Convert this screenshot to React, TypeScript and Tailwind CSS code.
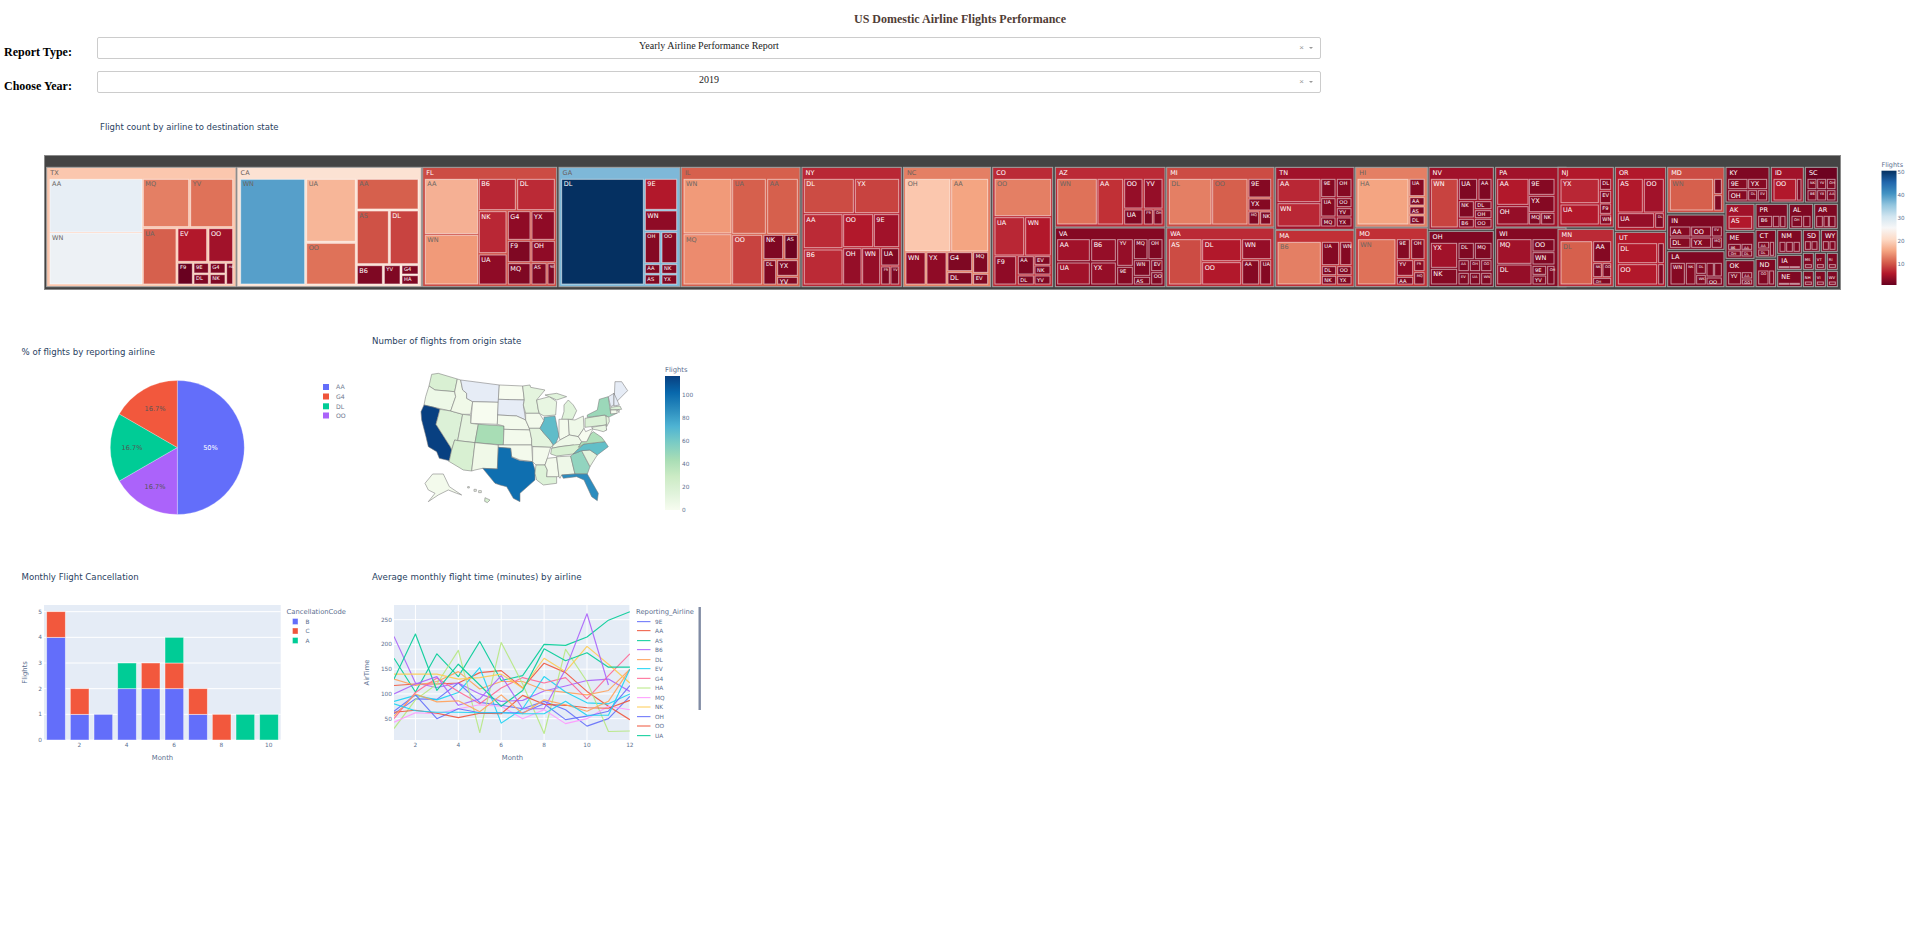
import React from "react";

type Child = [string, number, number, number, number, string?];
type St = [string, number, number, number, number, string, Child[]];

const D = "#7f0823";
const E = "#850923";
const F = "#950e28";
const G = "#a1122a";
const R = "#b2182b";
const B = "#bb2a36";
const H = "#cc4c44";
const I = "#d6604d";
const J = "#df7259";
const K = "#e47f64";

const groups: { o: number; s: St[] }[] = [
  {
    o: 30,
    s: [
      ["TX", 50, 52, 618, 410, "#fbc7ae", [
        ["AA", 60, 88, 336, 246, "#e7eef5"], ["WN", 60, 249, 336, 402, "#edf1f5"], ["MQ", 340, 88, 476, 230, K], ["YV", 482, 88, 608, 230, J],
        ["UA", 340, 236, 438, 402, I], ["EV", 444, 236, 530, 334, R], ["OO", 537, 236, 608, 334, G], ["F9", 444, 340, 487, 402, "#690120"],
        ["9E", 492, 340, 535, 369], ["G4", 541, 340, 585, 369], ["DL", 492, 374, 535, 402], ["NK", 541, 374, 585, 402], ["HA", 590, 340, 608, 402],
      ]],
      ["CA", 621, 52, 1174, 410, "#fce2d3", [
        ["WN", 632, 88, 824, 402, "#569fca"], ["UA", 830, 88, 976, 274, "#f7b698"], ["OO", 830, 280, 976, 402, J], ["AA", 982, 88, 1164, 177, I],
        ["AS", 982, 183, 1075, 341, "#cf5246"], ["DL", 1081, 183, 1164, 341, "#c84340"], ["B6", 982, 347, 1057, 402], ["YV", 1063, 347, 1110, 402],
        ["G4", 1116, 347, 1164, 372], ["HA", 1116, 377, 1164, 402],
      ]],
      ["FL", 1178, 52, 1580, 410, H, [
        ["AA", 1186, 88, 1343, 251, "#f5b094"], ["WN", 1186, 256, 1343, 402, "#f19a79"], ["B6", 1348, 88, 1456, 179, "#b92735"], ["DL", 1463, 88, 1573, 179, B],
        ["NK", 1348, 185, 1428, 308, "#b92735"], ["G4", 1435, 185, 1500, 268, "#8f0b26"], ["YX", 1506, 185, 1573, 268, "#8f0b26"], ["F9", 1435, 274, 1500, 335],
        ["OH", 1506, 274, 1573, 335, "#8f0b26"], ["UA", 1348, 315, 1428, 402, "#8f0b26"], ["MQ", 1435, 341, 1500, 402], ["AS", 1506, 341, 1548, 402], ["9E", 1554, 341, 1573, 402],
      ]],
    ],
  },
  {
    o: 520,
    s: [
      ["GA", 117, 52, 480, 410, "#7eb8d8", [
        ["DL", 125, 88, 370, 402, "#053061"], ["9E", 376, 88, 470, 178, R], ["WN", 376, 183, 470, 241, "#8f0b26"], ["OH", 376, 248, 419, 338, E], ["OO", 426, 248, 470, 338, E],
        ["AA", 376, 344, 419, 370], ["NK", 426, 344, 470, 370], ["AS", 376, 375, 419, 402], ["YX", 426, 375, 470, 402],
      ]],
      ["IL", 484, 52, 840, 410, I, [
        ["WN", 492, 88, 633, 249, "#f19a79"], ["MQ", 492, 254, 633, 402, "#ec8b6e"], ["UA", 638, 88, 736, 250, I], ["AA", 743, 88, 832, 250, I], ["OO", 638, 256, 725, 402, "#c84340"],
        ["NK", 732, 256, 788, 326], ["AS", 795, 256, 832, 326, "#6e0320"], ["DL", 732, 332, 767, 402], ["YX", 773, 332, 832, 376], ["YV", 773, 382, 832, 402],
      ]],
      ["NY", 846, 52, 1144, 410, "#b92735", [
        ["DL", 853, 88, 1000, 188, H], ["YX", 1006, 88, 1136, 188, "#c84340"], ["AA", 853, 194, 966, 293, B], ["OO", 971, 194, 1058, 290, R], ["9E", 1063, 194, 1136, 290, G],
        ["B6", 853, 300, 966, 402, B], ["OH", 971, 296, 1023, 402, F], ["WN", 1028, 296, 1079, 402, F], ["UA", 1085, 296, 1136, 345], ["F9", 1085, 351, 1108, 402], ["YV", 1113, 351, 1136, 402],
      ]],
      ["NC", 1150, 52, 1412, 410, K, [
        ["OH", 1157, 88, 1290, 303, "#fbc7ae"], ["AA", 1295, 88, 1403, 303, "#f4a582"], ["WN", 1158, 308, 1215, 402, "#8f0b26"], ["YX", 1221, 308, 1278, 402, "#8f0b26"],
        ["G4", 1284, 308, 1355, 362], ["DL", 1284, 368, 1355, 402], ["MQ", 1361, 308, 1403, 367], ["EV", 1361, 373, 1403, 402],
      ]],
      ["CO", 1418, 52, 1598, 410, B, [
        ["OO", 1425, 88, 1592, 197, K], ["UA", 1425, 203, 1511, 315, "#b92735"], ["WN", 1517, 203, 1591, 315, R], ["F9", 1425, 320, 1487, 402, "#8f0b26"],
        ["AA", 1495, 320, 1540, 372], ["EV", 1545, 320, 1590, 343], ["NK", 1545, 348, 1590, 372], ["DL", 1495, 378, 1540, 402], ["YV", 1545, 378, 1590, 402],
      ]],
    ],
  },
  {
    o: 1010,
    s: [
      ["AZ", 136, 52, 465, 231, B, [
        ["WN", 143, 88, 259, 222, J], ["AA", 264, 88, 338, 222, "#c13036"], ["OO", 344, 88, 396, 174, F], ["YV", 403, 88, 456, 174, F], ["UA", 344, 180, 396, 222], ["F9", 403, 180, 427, 222], ["OH", 432, 180, 456, 222],
      ]],
      ["VA", 136, 234, 465, 410, E, [
        ["AA", 143, 269, 238, 332, G], ["B6", 245, 269, 316, 332, F], ["YV", 323, 269, 367, 346, F], ["MQ", 373, 269, 411, 326], ["OH", 417, 269, 456, 326], ["UA", 143, 339, 238, 402, G],
        ["YX", 245, 339, 316, 402, F], ["9E", 323, 352, 367, 402, E], ["WN", 373, 332, 419, 376], ["EV", 425, 332, 456, 362], ["OO", 425, 368, 456, 402], ["AS", 373, 382, 419, 402],
      ]],
      ["MI", 470, 52, 792, 231, H, [
        ["DL", 478, 88, 603, 222, K], ["OO", 608, 88, 711, 222, I], ["9E", 717, 88, 782, 141, E], ["YX", 717, 147, 782, 180, E], ["MQ", 717, 186, 746, 222], ["NK", 752, 186, 782, 222],
      ]],
      ["WA", 470, 234, 792, 410, B, [
        ["AS", 478, 269, 573, 402, H], ["DL", 578, 269, 692, 332, R], ["WN", 698, 269, 782, 326, F], ["OO", 578, 338, 692, 402, R], ["AA", 698, 332, 746, 402, E], ["UA", 752, 332, 782, 402, E],
      ]],
      ["TN", 797, 52, 1032, 238, G, [
        ["AA", 804, 88, 930, 155, "#b92735"], ["WN", 804, 161, 930, 228, "#b92735"], ["9E", 935, 88, 975, 140, E], ["OH", 982, 88, 1023, 140, E], ["UA", 935, 146, 975, 198, E],
        ["OO", 982, 146, 1023, 170], ["YV", 982, 176, 1023, 198], ["MQ", 935, 204, 975, 228], ["YX", 982, 204, 1023, 228],
      ]],
      ["MA", 797, 241, 1032, 410, "#c13036", [
        ["B6", 804, 277, 931, 402, K], ["UA", 937, 277, 986, 344, E], ["WN", 992, 277, 1023, 344, E], ["DL", 937, 350, 977, 374], ["OO", 983, 350, 1023, 374], ["NK", 937, 379, 977, 402], ["YX", 983, 379, 1023, 402],
      ]],
      ["HI", 1037, 52, 1252, 231, K, [
        ["HA", 1044, 88, 1194, 222, "#f4a582"], ["UA", 1200, 88, 1242, 137, E], ["AA", 1200, 143, 1242, 165], ["AS", 1200, 171, 1242, 192], ["DL", 1200, 198, 1242, 222],
      ]],
      ["MO", 1037, 234, 1252, 410, "#c13036", [
        ["WN", 1045, 269, 1155, 402, J], ["9E", 1162, 269, 1198, 326, E], ["OH", 1205, 269, 1242, 326, E], ["YV", 1162, 332, 1208, 376, "#8f0b26"], ["F9", 1214, 332, 1242, 362, E], ["MQ", 1214, 368, 1242, 402], ["AA", 1162, 382, 1208, 402],
      ]],
      ["NV", 1257, 52, 1450, 238, G, [
        ["WN", 1264, 88, 1342, 231, "#c84340"], ["UA", 1348, 88, 1400, 148], ["AA", 1407, 88, 1443, 148], ["NK", 1348, 155, 1390, 201], ["DL", 1396, 155, 1443, 176], ["OH", 1396, 182, 1443, 203], ["B6", 1348, 208, 1390, 231], ["OO", 1396, 208, 1443, 231],
      ]],
      ["OH", 1257, 244, 1450, 410, D, [
        ["YX", 1264, 280, 1340, 352, G], ["NK", 1264, 358, 1340, 402, E], ["DL", 1347, 280, 1390, 326], ["MQ", 1396, 280, 1443, 326], ["AA", 1347, 332, 1375, 362], ["OH", 1381, 332, 1409, 362], ["OO", 1415, 332, 1443, 362],
        ["EV", 1347, 370, 1375, 402], ["UA", 1381, 370, 1409, 402], ["WN", 1415, 370, 1443, 402],
      ]],
      ["PA", 1457, 52, 1668, 231, G, [
        ["AA", 1463, 88, 1554, 163, R], ["9E", 1558, 88, 1632, 133, E], ["YX", 1558, 139, 1632, 185, E], ["OH", 1463, 170, 1554, 222, F], ["MQ", 1558, 190, 1590, 222], ["NK", 1595, 190, 1632, 222],
      ]],
      ["WI", 1457, 234, 1668, 410, E, [
        ["MQ", 1463, 269, 1563, 340, G], ["DL", 1463, 345, 1563, 402, F], ["OO", 1569, 269, 1632, 303], ["WN", 1569, 308, 1632, 342], ["9E", 1569, 349, 1607, 373], ["YV", 1569, 378, 1607, 402], ["OH", 1613, 349, 1632, 402],
      ]],
    ],
  },
  {
    o: 1500,
    s: [
      ["NJ", 174, 52, 340, 231, R, [
        ["YX", 183, 88, 295, 158, "#b92735"], ["UA", 183, 165, 295, 222, R], ["DL", 301, 88, 332, 118, E], ["EV", 301, 124, 332, 158, E], ["F9", 301, 162, 332, 190, E], ["WN", 301, 195, 332, 222, E],
      ]],
      ["MN", 174, 238, 340, 410, B, [
        ["DL", 183, 275, 275, 402, I], ["AA", 281, 275, 332, 335, E], ["NK", 281, 341, 304, 380], ["OO", 309, 341, 332, 380], ["OH", 281, 385, 332, 402],
      ]],
      ["OR", 346, 52, 497, 241, R, [
        ["AS", 355, 88, 427, 186, R], ["OO", 433, 88, 490, 186, G], ["UA", 355, 191, 461, 232, F], ["DL", 467, 191, 490, 232],
      ]],
      ["UT", 346, 247, 497, 410, R, [
        ["DL", 355, 281, 470, 338, R], ["OO", 355, 344, 470, 402, R], ["", 476, 281, 490, 338], ["", 476, 344, 490, 402],
      ]],
      ["MD", 503, 52, 672, 188, H, [["WN", 511, 88, 638, 180, I], ["", 644, 88, 664, 131], ["", 644, 137, 664, 180]]],
      ["IN", 503, 195, 672, 298, D, [
        ["AA", 511, 231, 570, 258, E], ["OO", 575, 231, 632, 258, E], ["DL", 511, 264, 570, 292, E], ["YX", 575, 264, 632, 292, E], ["EV", 637, 231, 664, 258], ["MQ", 637, 264, 664, 292],
      ]],
      ["LA", 503, 305, 672, 410, D, [
        ["WN", 513, 340, 553, 402, E], ["NK", 559, 340, 585, 402, E], ["DL", 590, 340, 616, 370], ["WK", 590, 376, 616, 402], ["", 621, 340, 640, 378], ["", 644, 340, 664, 378], ["OO", 621, 384, 664, 402],
      ]],
      ["KY", 678, 52, 807, 156, D, [["9E", 686, 88, 741, 116, E], ["YX", 746, 88, 800, 116, E], ["OH", 686, 122, 741, 150, E], ["DL", 746, 122, 770, 150], ["EV", 775, 122, 800, 150]]],
      ["AK", 678, 163, 762, 241, G, [["AS", 687, 199, 755, 235, R]]],
      ["ME", 678, 247, 762, 325, D, [["B6", 686, 283, 721, 298], ["AA", 726, 283, 755, 298], ["OH", 686, 303, 721, 318], ["DL", 726, 303, 755, 318]]],
      ["OK", 678, 332, 762, 410, D, [["YV", 686, 368, 722, 402], ["AA", 727, 368, 755, 384], ["OO", 727, 390, 755, 402]]],
      ["ID", 814, 52, 910, 156, G, [["OO", 822, 88, 887, 150, R], ["", 892, 88, 903, 150]]],
      ["SC", 916, 52, 1012, 156, "#6d0220", [
        ["NK", 924, 88, 948, 116], ["YV", 953, 88, 977, 116], ["OH", 982, 88, 1005, 116], ["B6", 924, 122, 948, 150], ["YX", 953, 122, 977, 150], ["AA", 982, 122, 1005, 150],
      ]],
      ["PR", 768, 163, 862, 235, D, [["B6", 776, 199, 815, 230], ["", 820, 199, 837, 230], ["", 842, 199, 855, 230]]],
      ["AL", 868, 163, 938, 235, D, [["OH", 876, 199, 905, 230], ["", 911, 199, 930, 230]]],
      ["AR", 944, 163, 1012, 235, D, [["", 950, 199, 967, 230], ["", 972, 199, 985, 230], ["", 988, 199, 1005, 230]]],
      ["CT", 768, 241, 827, 321, D, [["AA", 776, 277, 806, 294], ["DL", 776, 300, 806, 316], ["", 811, 277, 821, 316]]],
      ["NM", 833, 241, 904, 310, D, [["", 840, 277, 855, 304], ["", 860, 277, 877, 304], ["", 882, 277, 898, 304]]],
      ["SD", 910, 241, 958, 304, D, [["", 916, 275, 931, 298], ["", 936, 275, 951, 298]]],
      ["WY", 964, 241, 1012, 304, D, [["", 970, 275, 985, 298], ["", 990, 275, 1005, 298]]],
      ["ND", 768, 328, 827, 410, D, [["OO", 776, 363, 804, 402], ["", 809, 363, 821, 402]]],
      ["IA", 833, 316, 904, 358, D, [["", 838, 350, 866, 353], ["", 870, 350, 898, 353]]],
      ["NE", 833, 364, 904, 410, D, [["", 838, 400, 866, 403], ["", 870, 400, 898, 403]]],
      ["MS", 910, 310, 940, 358, D, [["", 916, 344, 934, 352]]],
      ["VT", 946, 310, 976, 358, D, [["", 952, 344, 970, 352]]],
      ["RI", 982, 310, 1012, 358, D, [["", 988, 344, 1006, 352]]],
      ["NH", 910, 364, 940, 410, D, [["", 916, 396, 934, 403]]],
      ["VI", 946, 364, 976, 410, D, [["", 952, 396, 970, 403]]],
      ["WV", 982, 364, 1012, 410, D, [["", 988, 396, 1006, 403]]],
    ],
  },
];

function isLight(hex: string) {
  const n = parseInt(hex.slice(1), 16);
  const l = 0.299 * (n >> 16) + 0.587 * ((n >> 8) & 255) + 0.114 * (n & 255);
  return l > 118 && hex !== "#569fca" ? true : hex === "#569fca";
}

const FONT = "'DejaVu Sans','Open Sans',sans-serif";

function Treemap() {
  const tiles: React.ReactNode[] = [];
  groups.forEach((g, gi) => {
    g.s.forEach((s, si) => {
      const x = g.o + s[1] / 3;
      const y = 150 + s[2] / 3;
      const w = (s[3] - s[1]) / 3;
      const h = (s[4] - s[2]) / 3;
      const sfs = w < 12 ? 3.8 : 6.5;
      tiles.push(
        <g key={gi + "-" + si}>
          <rect x={x} y={y} width={w} height={h} fill={s[5]} stroke="#a3a3a3" strokeWidth={1} />
          <text x={x + (w < 12 ? 1.5 : 3.6)} y={y + 7.6} fontSize={sfs} fill={isLight(s[5]) ? "#6b5f5c" : "#ffffff"}>{s[0]}</text>
          {s[6].map((c, ci) => {
            const cx = g.o + c[1] / 3;
            const cy = 150 + c[2] / 3;
            const cw = (c[3] - c[1]) / 3;
            const ch = (c[4] - c[2]) / 3;
            const fill = c[5] ?? D;
            const fs = cw < 10 || ch < 6 ? 3.6 : cw < 17 ? 5.2 : 6.5;
            return (
              <g key={ci}>
                <rect x={cx} y={cy} width={cw} height={ch} fill={fill} stroke="#ffffff" strokeOpacity={0.55} strokeWidth={1} />
                {c[0] && ch >= 4 ? (
                  <text x={cx + 2} y={cy + fs + 0.6} fontSize={fs} fill={isLight(fill) ? "#6b6663" : "#ffffff"}>{c[0]}</text>
                ) : null}
              </g>
            );
          })}
        </g>
      );
    });
  });
  const ticks: [string, number][] = [["50", 172], ["40", 195], ["30", 218], ["20", 241], ["10", 264]];
  return (
    <svg width="1920" height="195" viewBox="0 105 1920 195" className="block" fontFamily={FONT}>
      <defs>
        <linearGradient id="rdbu" x1="0" y1="0" x2="0" y2="1">
          {["#053061", "#2166ac", "#4393c3", "#92c5de", "#d1e5f0", "#f7f7f7", "#fddbc7", "#f4a582", "#d6604d", "#b2182b", "#67001f"].map((c, i) => (
            <stop key={i} offset={i / 10} stopColor={c} />
          ))}
        </linearGradient>
      </defs>
      <text x="100" y="130" fontSize={8.5} fill="#2a3f5f">Flight count by airline to destination state</text>
      <rect x="44.5" y="155.5" width="1796" height="134" fill="#444444" stroke="#8a8a8a" strokeWidth={1} />
      {tiles}
      <text x="1881.5" y="167" fontSize={6.5} fill="#5c6f8f">Flights</text>
      <rect x="1881.5" y="170.7" width="15" height="114.3" fill="url(#rdbu)" />
      {ticks.map(([t, y]) => (
        <text key={t} x="1897.5" y={y + 2} fontSize={5.6} fill="#5c6f8f">{t}</text>
      ))}
    </svg>
  );
}

function polar(cx: number, cy: number, r: number, deg: number) {
  const a = ((deg - 90) * Math.PI) / 180;
  return [cx + r * Math.cos(a), cy + r * Math.sin(a)];
}

function Pie() {
  const cx = 177.3, cy = 447.5, r = 67;
  const sl: [number, number, string][] = [[0, 180, "#636efa"], [180, 240, "#ab63fa"], [240, 300, "#00cc96"], [300, 360, "#f2583d"]];
  const leg: [string, string, number][] = [["AA", "#636efa", 387], ["G4", "#ef553b", 396.5], ["DL", "#00cc96", 406.3], ["OO", "#ab63fa", 415.5]];
  return (
    <svg width="360" height="210" viewBox="0 325 360 210" className="block shrink-0" fontFamily={FONT}>
      <text x="21.5" y="355" fontSize={8.6} fill="#2a3f5f">% of flights by reporting airline</text>
      {sl.map(([a, b, c]) => {
        const [x1, y1] = polar(cx, cy, r, a);
        const [x2, y2] = polar(cx, cy, r, b);
        const large = b - a > 180 ? 1 : 0;
        return <path key={c} d={`M${cx} ${cy}L${x1} ${y1}A${r} ${r} 0 ${large} 1 ${x2} ${y2}Z`} fill={c} stroke="#ffffff" strokeOpacity={0.5} strokeWidth={0.5} />;
      })}
      <text x="210.5" y="450" fontSize={6.6} textAnchor="middle" fill="#ffffff">50%</text>
      <text x="155" y="411" fontSize={6.6} textAnchor="middle" fill="#555">16.7%</text>
      <text x="132" y="450" fontSize={6.6} textAnchor="middle" fill="#555">16.7%</text>
      <text x="155" y="489" fontSize={6.6} textAnchor="middle" fill="#555">16.7%</text>
      {leg.map(([t, c, y]) => (
        <g key={t}>
          <rect x="323" y={y - 3} width="6" height="6" fill={c} />
          <text x="336" y={y + 2.4} fontSize={6.2} fill="#6f7a8f">{t}</text>
        </g>
      ))}
    </svg>
  );
}

const NONE = "#e6ecf6";
const states: [string, string][] = [
  ["215,133 235,130 292,147 284,185 225,180 207,168", "#d9f0d3"],
  ["207,168 225,180 284,185 287,200 272,243 222,232 192,225 197,200", "#edf8e7"],
  ["192,225 222,232 240,238 228,283 272,352 275,360 268,392 238,385 230,365 205,350 198,320 185,270 183,245", "#084081"],
  ["240,238 272,243 308,253 293,332 284,330 275,360 272,352 228,283", "#dcf1d7"],
  ["292,147 302,150 308,180 320,190 320,205 338,215 332,253 308,253 272,243 287,200 284,185", "#f0f9e8"],
  ["302,150 418,165 415,217 338,215 320,205 320,190 308,180", NONE],
  ["338,215 415,217 412,283 332,280", "#f7fcf0"],
  ["308,253 332,256 332,280 355,283 345,338 293,332", "#e4f4de"],
  ["293,332 345,338 335,423 310,420 265,393 268,392 275,360 284,330", "#d8f0d2"],
  ["355,283 432,288 430,345 345,338", "#a8ddb5"],
  ["345,338 415,345 412,417 368,415 345,420 335,423", "#f0f9e8"],
  ["418,165 488,168 493,210 415,208", "#f7fcf0"],
  ["415,208 493,210 490,225 497,270 470,258 413,255", NONE],
  ["413,255 470,258 497,270 510,300 432,298 432,288 412,283", "#f3faec"],
  ["432,298 510,300 515,328 515,345 430,345", "#f3faec"],
  ["415,345 515,345 518,395 480,390 455,380 452,355 415,352", "#f3faec"],
  ["415,352 452,355 455,382 480,392 518,395 525,420 525,450 480,490 480,515 460,505 440,470 420,465 405,460 368,415 412,417", "#0f6fb0"],
  ["488,168 510,165 512,172 555,180 530,210 535,240 538,250 497,250 490,225 493,210", "#e4f4de"],
  ["497,250 538,250 552,272 540,295 508,295 497,270", "#f3faec"],
  ["508,295 540,295 552,310 570,330 580,345 572,352 518,350 515,345 515,328", "#e4f4de"],
  ["518,350 572,352 562,385 555,405 528,405 518,395", "#f3faec"],
  ["528,405 555,405 562,420 560,440 590,440 590,460 550,465 530,450 525,430", "#ddf2d8"],
  ["562,385 590,382 597,440 560,440 562,420 555,405", "#f3faec"],
  ["530,210 568,200 590,215 587,255 552,258 538,250 535,240", "#e8f6e2"],
  ["552,262 585,258 597,318 585,345 580,345 570,330 552,310 540,295 552,272", "#60bcc9"],
  ["612,225 625,210 640,225 650,242 638,268 605,268 612,245", "#e0f3db"],
  ["555,195 590,190 620,200 590,210 568,200", "#e0f3db"],
  ["597,268 625,268 628,315 600,330 597,318", "#f3faec"],
  ["625,268 645,270 670,258 672,295 655,320 628,315", "#eef8e8"],
  ["580,345 600,330 628,315 655,320 665,335 655,352 640,345 600,350 575,355", "#eef8e8"],
  ["572,372 575,355 600,350 640,345 672,342 655,357 640,372 590,378", "#d8f0d2"],
  ["590,380 598,380 632,378 645,432 605,435 600,445 597,440", "#eef8e8"],
  ["632,378 640,372 665,362 690,410 682,432 645,432", "#92d4bf"],
  ["605,435 645,432 682,432 715,490 712,512 695,500 672,450 650,440 610,445", "#2b8cbe"],
  ["665,362 690,360 712,375 690,410", "#e4f4de"],
  ["640,372 655,357 672,342 735,335 745,350 712,375 690,360 665,362", "#62bfc8"],
  ["655,352 665,335 680,335 690,315 700,305 725,322 735,335 672,342", "#b0e0bb"],
  ["655,320 672,295 677,305 700,295 690,315 680,335 665,335", "#f7fcf0"],
  ["675,265 735,255 745,270 738,285 675,292", "#dcf1d7"],
  ["682,255 712,240 718,208 745,200 752,250 770,250 745,262 735,255 682,262", "#9bd8b9"],
  ["765,155 785,155 803,182 770,215 763,200", NONE],
  ["745,200 762,190 762,225 752,230", NONE],
  ["762,190 775,218 778,225 762,228", NONE],
  ["752,232 780,228 785,238 752,240", "#dcf1d7"],
  ["752,240 770,240 772,250 752,252", "#f3faec"],
  ["772,240 778,240 777,248", "#f3faec"],
  ["738,258 747,262 748,275 740,290", "#e4f4de"],
  ["735,288 740,300 733,302", "#f7fcf0"],
  ["695,292 738,285 740,300 730,305 712,300 700,298", "#e8f6e2"],
  ["218,432 250,432 268,470 305,495 290,490 265,480 235,495 205,515 225,490 205,480 195,460", "#f3faec"],
  ["323,470 328,470 328,474 323,474", "#f3faec"],
  ["342,478 349,478 349,484 342,484", "#f3faec"],
  ["356,482 364,482 364,488 356,488", "#f3faec"],
  ["375,503 390,510 382,518 374,514", "#d8f0d2"],
];

function USMap() {
  const ticks: [string, number][] = [["0", 509.7], ["20", 486.7], ["40", 463.7], ["60", 440.7], ["80", 417.7], ["100", 395]];
  return (
    <svg width="360" height="210" viewBox="360 325 360 210" className="block shrink-0" fontFamily={FONT}>
      <defs>
        <linearGradient id="gnbu" x1="0" y1="0" x2="0" y2="1">
          {["#084081", "#0868ac", "#2b8cbe", "#4eb3d3", "#7bccc4", "#a8ddb5", "#ccebc5", "#e0f3db", "#f7fcf0"].map((c, i) => (
            <stop key={i} offset={i / 8} stopColor={c} />
          ))}
        </linearGradient>
      </defs>
      <text x="372" y="344" fontSize={8.6} fill="#2a3f5f">Number of flights from origin state</text>
      <g transform="translate(360 330) scale(0.3333)">
        {states.map(([p, c], i) => (
          <polygon key={i} points={p} fill={c} stroke="#7c7c7c" strokeWidth={1.7} strokeLinejoin="round" />
        ))}
      </g>
      <text x="665" y="372" fontSize={6.8} fill="#5c6f8f">Flights</text>
      <rect x="665" y="376" width="15" height="134" fill="url(#gnbu)" />
      {ticks.map(([t, y]) => (
        <text key={t} x="682" y={y + 2} fontSize={5.8} fill="#5c6f8f">{t}</text>
      ))}
    </svg>
  );
}

const barData: [number, number, number, number][] = [
  [1, 4, 1, 0], [2, 1, 1, 0], [3, 1, 0, 0], [4, 2, 0, 1], [5, 2, 1, 0], [6, 2, 1, 1], [7, 1, 1, 0], [8, 0, 1, 0], [9, 0, 0, 1], [10, 0, 0, 1],
];

function Bars() {
  const y = (v: number) => 560 + (540 - v * 77) / 3;
  const x0 = (m: number) => (140 + (m - 1) * 71) / 3;
  const w = 56 / 3;
  return (
    <svg width="360" height="212" viewBox="0 558 360 212" className="block shrink-0" fontFamily={FONT}>
      <text x="21.5" y="580" fontSize={8.6} fill="#2a3f5f">Monthly Flight Cancellation</text>
      <rect x="44" y="605" width="236.7" height="135" fill="#e5ecf6" />
      {[0, 1, 2, 3, 4, 5].map((v) => (
        <g key={v}>
          <line x1="44" x2="280.7" y1={y(v)} y2={y(v)} stroke="#ffffff" strokeWidth={1} />
          <text x="42" y={y(v) + 2} fontSize={5.8} textAnchor="end" fill="#5c6f8f">{v}</text>
        </g>
      ))}
      {barData.map(([m, b, c, a]) => {
        const parts: [number, string][] = [[b, "#636efa"], [c, "#f2583d"], [a, "#00cc96"]];
        let acc = 0;
        return (
          <g key={m}>
            {parts.map(([v, col], i) => {
              if (!v) return null;
              const r = (
                <rect key={i} x={x0(m)} y={y(acc + v)} width={w} height={y(acc) - y(acc + v)} fill={col} stroke="#ffffff" strokeOpacity={0.55} strokeWidth={0.8} />
              );
              acc += v;
              return r;
            })}
          </g>
        );
      })}
      {[2, 4, 6, 8, 10].map((m) => (
        <text key={m} x={(238 + ((m - 2) / 2) * 142) / 3} y="747" fontSize={5.8} textAnchor="middle" fill="#5c6f8f">{m}</text>
      ))}
      <text x="162.5" y="760" fontSize={6.8} textAnchor="middle" fill="#5c6f8f">Month</text>
      <text x="0" y="0" fontSize={6.8} textAnchor="middle" fill="#5c6f8f" transform="translate(27 672.5) rotate(-90)">Flights</text>
      <text x="286.5" y="614" fontSize={6.8} fill="#5c6f8f">CancellationCode</text>
      {([["B", "#636efa", 621.5], ["C", "#ef553b", 631], ["A", "#00cc96", 640.5]] as [string, string, number][]).map(([t, c, yy]) => (
        <g key={t}>
          <rect x="292.5" y={yy - 3} width="5.5" height="6" fill={c} stroke="#ffffff" strokeOpacity={0.6} strokeWidth={0.6} />
          <text x="305.5" y={yy + 2.2} fontSize={5.8} fill="#5c6f8f">{t}</text>
        </g>
      ))}
    </svg>
  );
}

const lines: [string, number[]][] = [
  ["#636efa", [60, 90, 89, 122, 83, 77, 70, 85, 68, 35, 50, 95]],
  ["#ef553b", [117, 120, 120, 122, 143, 147, 112, 162, 143, 105, 75, 48]],
  ["#00cc96", [172, 104, 181, 135, 206, 127, 137, 200, 198, 215, 249, 266]],
  ["#ab63fa", [216, 122, 113, 122, 100, 85, 87, 106, 116, 127, 130, 105]],
  ["#ffa15a", [130, 117, 125, 145, 110, 125, 125, 108, 103, 98, 107, 150]],
  ["#19d3f3", [85, 97, 88, 103, 153, 41, 70, 135, 104, 82, 80, 100]],
  ["#ff6692", [50, 103, 132, 105, 80, 112, 133, 122, 133, 90, 137, 181]],
  ["#b6e880", [30, 88, 120, 188, 22, 204, 120, 20, 190, 125, 24, 25]],
  ["#ff97ff", [43, 62, 60, 70, 78, 75, 50, 68, 40, 50, 75, 68]],
  ["#fecb52", [140, 140, 140, 130, 133, 140, 112, 172, 145, 196, 160, 122]],
  ["#636efa", [65, 98, 50, 70, 62, 62, 62, 80, 48, 55, 65, 117]],
  ["#ef553b", [63, 67, 61, 52, 61, 60, 97, 79, 77, 72, 71, 87]],
  ["#00cc96", [130, 221, 107, 160, 118, 75, 107, 191, 167, 183, 154, 154]],
  ["#ab63fa", [100, 120, 135, 77, 90, 137, 70, 70, 150, 262, 118]],
  ["#ffa15a", [55, 100, 84, 86, 64, 98, 60, 88, 78, 65, 85, 150]],
  ["#19d3f3", [80, 66, 63, 63, 62, 62, 60, 60, 85, 57, 57, 150]],
];

const legendNames: [string, string, number][] = [
  ["9E", "#636efa", 185], ["AA", "#ef553b", 212], ["AS", "#00cc96", 242], ["B6", "#ab63fa", 269], ["DL", "#ffa15a", 299], ["EV", "#19d3f3", 326], ["G4", "#ff6692", 355],
  ["HA", "#b6e880", 384], ["MQ", "#ff97ff", 413], ["NK", "#fecb52", 441], ["OH", "#636efa", 470], ["OO", "#ef553b", 498], ["UA", "#00cc96", 527],
];

function LinesChart() {
  const px = (m: number) => 360 + (102 + (m - 1) * 64.33) / 3;
  const py = (v: number) => 560 + (179 + (250 - v) * 1.485) / 3;
  return (
    <svg width="360" height="212" viewBox="360 558 360 212" className="block shrink-0" fontFamily={FONT}>
      <defs>
        <clipPath id="plotclip"><rect x="394" y="605" width="236" height="135" /></clipPath>
      </defs>
      <text x="372" y="580" fontSize={8.7} fill="#2a3f5f">Average monthly flight time (minutes) by airline</text>
      <rect x="394" y="605" width="236" height="135" fill="#e5ecf6" />
      {[50, 100, 150, 200, 250].map((v) => (
        <g key={v}>
          <line x1="394" x2="630" y1={py(v)} y2={py(v)} stroke="#ffffff" strokeWidth={1} />
          <text x="392" y={py(v) + 2} fontSize={5.8} textAnchor="end" fill="#5c6f8f">{v}</text>
        </g>
      ))}
      {[2, 4, 6, 8, 10, 12].map((m) => (
        <g key={m}>
          <line y1="605" y2="740" x1={px(m)} x2={px(m)} stroke="#ffffff" strokeWidth={1} />
          <text x={px(m)} y="747" fontSize={5.8} textAnchor="middle" fill="#5c6f8f">{m}</text>
        </g>
      ))}
      <g clipPath="url(#plotclip)">
        {lines.map(([c, vs], i) => (
          <polyline key={i} points={vs.map((v, k) => `${px(k + 1)},${py(v)}`).join(" ")} fill="none" stroke={c} strokeWidth={1.15} strokeOpacity={0.9} strokeLinejoin="round" />
        ))}
      </g>
      <text x="512.5" y="760" fontSize={6.8} textAnchor="middle" fill="#5c6f8f">Month</text>
      <text x="0" y="0" fontSize={6.8} textAnchor="middle" fill="#5c6f8f" transform="translate(369 672.5) rotate(-90)">AirTime</text>
      <text x="636" y="614" fontSize={6.8} fill="#5c6f8f">Reporting_Airline</text>
      {legendNames.map(([t, c, y]) => (
        <g key={t}>
          <line x1="637" x2="650.5" y1={560 + y / 3} y2={560 + y / 3} stroke={c} strokeWidth={1} />
          <text x="655" y={560 + y / 3 + 2.2} fontSize={5.8} fill="#5c6f8f">{t}</text>
        </g>
      ))}
      <rect x="698.5" y="607" width="2.4" height="103" fill="#808ba4" />
    </svg>
  );
}

function Select({ value }: { value: string }) {
  return (
    <div className="relative h-[22px] w-[1224px] rounded-[2px] border border-[#cccccc] bg-white text-center font-['Liberation_Serif',serif] text-[10px] leading-[16px] text-[#222222]">
      {value}
      <span className="absolute right-[16px] top-[3px] font-['Liberation_Sans',sans-serif] text-[8px] leading-[14px] text-[#999999]">×</span>
      <span className="absolute right-[7px] top-[9px] h-0 w-0 border-x-[2px] border-t-[2px] border-x-transparent border-t-[#999999]" />
    </div>
  );
}

function Row({ label, value }: { label: string; value: string }) {
  return (
    <div className="flex h-[34px] items-start">
      <div className="w-[97px] pl-[4px] pt-[6.5px] font-['Liberation_Serif',serif] text-[12px] font-bold leading-[17px] text-black">{label}</div>
      <Select value={value} />
    </div>
  );
}

export default function App() {
  return (
    <div className="h-[937px] w-full overflow-hidden bg-white">
      <h1 className="h-[37px] pt-[12px] text-center font-['Liberation_Serif',serif] text-[12px] font-bold leading-[14px] text-[#503D36]">
        US Domestic Airline Flights Performance
      </h1>
      <Row label="Report Type:" value="Yearly Airline Performance Report" />
      <Row label="Choose Year:" value="2019" />
      <Treemap />
      <div className="mt-[25px] flex">
        <Pie />
        <USMap />
      </div>
      <div className="mt-[23px] flex">
        <Bars />
        <LinesChart />
      </div>
    </div>
  );
}
